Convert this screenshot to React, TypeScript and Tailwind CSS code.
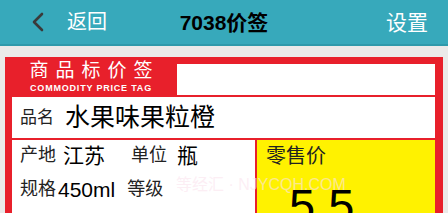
import React from "react";

export default function App() {
  return (
    <div
      className="relative w-[448px] h-[213px] overflow-hidden bg-[#ebeae9]"
      style={{ fontFamily: '"Liberation Sans", "Noto Sans CJK SC", sans-serif' }}
    >
      <header className="h-[46px] bg-[#37a9bb] border-b-2 border-[#2e9aab] grid grid-cols-[1fr_auto_1fr] items-center">
        <div className="flex items-center">
          <svg className="ml-[30px]" width="16" height="20" viewBox="0 0 16 20" fill="none">
            <path d="M12 2 L4 10 L12 18" stroke="#3a3a3a" strokeWidth="2.6" strokeLinecap="round" strokeLinejoin="round" />
          </svg>
          <span className="ml-[21px] text-white text-[20px] leading-none">返回</span>
        </div>
        <div className="text-black font-bold text-[21px] leading-none">7038价签</div>
        <div className="flex justify-end pr-[20px]">
          <span className="text-white text-[21px] leading-none">设置</span>
        </div>
      </header>

      <div className="pt-[11px] px-[5px]">
        <div className="bg-[#e8202b] h-[200px]">
          <div className="flex h-[39px]">
            <div className="w-[172px] flex flex-col items-center pt-[4px] text-white">
              <div className="text-[19px] leading-none tracking-[7px] pl-[7px]">商品标价签</div>
              <div className="mt-[4px] text-[9px] leading-none tracking-[0.8px] font-bold" style={{ fontFamily: '"Liberation Sans", sans-serif' }}>
                COMMODITY PRICE TAG
              </div>
            </div>
            <div className="flex-1 bg-white mt-[7px] mr-[8px] mb-[1px]" />
          </div>
          <div className="ml-[7px] mr-[8px] mt-[1px] h-[41px] bg-white flex items-center">
            <span className="ml-[8px] text-[17px] leading-none text-[#222]">品名</span>
            <span className="ml-[11px] text-[25px] leading-none text-black">水果味果粒橙</span>
          </div>
          <div className="ml-[7px] mr-[8px] mt-[2px] h-[80px] flex">
            <div className="w-[243px] bg-white flex flex-col pt-[6px]">
              <div className="flex items-center h-[18px] text-[#222]">
                <span className="ml-[8px] text-[18px] leading-none">产地</span>
                <span className="ml-[7px] text-[21px] leading-none text-black">江苏</span>
                <span className="ml-[26px] text-[18px] leading-none">单位</span>
                <span className="ml-[10px] text-[21px] leading-none text-black">瓶</span>
              </div>
              <div className="flex items-center h-[18px] mt-[16px] text-[#222]">
                <span className="ml-[8px] text-[18px] leading-none">规格</span>
                <span className="ml-[2px] text-[21px] leading-none text-black">450ml</span>
                <span className="ml-[12px] text-[18px] leading-none">等级</span>
              </div>
            </div>
            <div className="flex-1 ml-[2px] bg-[#fff200] flex flex-col">
              <span className="ml-[9px] mt-[6px] text-[20px] leading-none text-[#222]">零售价</span>
              <span className="ml-[32px] mt-[16px] text-[47px] leading-none text-black">5.5</span>
            </div>
          </div>
        </div>
      </div>

      <div className="absolute left-[176px] top-[177px] text-[16px] leading-none text-[#fbe3ee]/60 whitespace-nowrap pointer-events-none">
        等经汇 · NJYCQH.COM
      </div>
    </div>
  );
}
